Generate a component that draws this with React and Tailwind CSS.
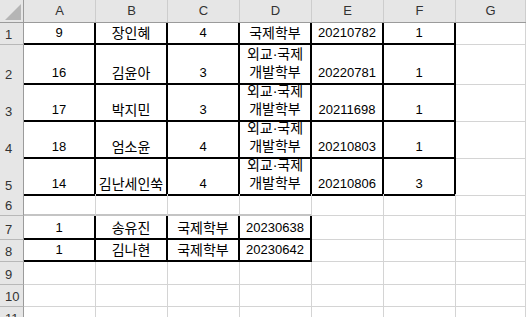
import React from 'react';

// Spreadsheet grid: column letters across the top, row numbers down the left
const columns = ['A', 'B', 'C', 'D', 'E', 'F', 'G'];
const wrapDept = ['외교·국제', '개발학부'];

const rows = [
    { n: 1, h: 'h-[22px]', boxed: 6, cells: ['9', '장인혜', '4', '국제학부', '20210782', '1'] },
    { n: 2, h: 'h-[37px]', boxed: 6, cells: ['16', '김윤아', '3', wrapDept, '20220781', '1'] },
    { n: 3, h: 'h-[37px]', boxed: 6, cells: ['17', '박지민', '3', wrapDept, '20211698', '1'] },
    { n: 4, h: 'h-[37px]', boxed: 6, cells: ['18', '엄소윤', '4', wrapDept, '20210803', '1'] },
    { n: 5, h: 'h-[38px]', boxed: 6, cells: ['14', '김난세인쑥', '4', wrapDept, '20210806', '3'] },
    { n: 6, h: 'h-[22px]', boxed: 0, shade: 4, cells: [] },
    { n: 7, h: 'h-[24px]', boxed: 4, cells: ['1', '송유진', '국제학부', '20230638'] },
    { n: 8, h: 'h-[22px]', boxed: 4, cells: ['1', '김나현', '국제학부', '20230642'] },
    { n: 9, h: 'h-[23px]', boxed: 0, cells: [] },
    { n: 10, h: 'h-[22px]', boxed: 0, cells: [] },
    { n: 11, h: 'h-[22px]', boxed: 0, cells: [] },
];

const isKorean = (v) => /[\uac00-\ud7a3]/.test(v);

const CellValue = ({ value }) => {
    if (!value) return null;
    if (Array.isArray(value)) {
        return (
            <div className="flex flex-col items-center text-[14px] leading-[18px]">
                {value.map((line, i) => (
                    <span key={i}>{line}</span>
                ))}
            </div>
        );
    }
    return (
        <span className={isKorean(value) ? 'text-[14px] leading-[16px]' : 'text-[13px] leading-[16px]'}>
            {value}
        </span>
    );
};

const Row = ({ row }) => (
    <div className={`grid grid-cols-[24px_repeat(6,72px)_1fr] ${row.h}`}>
        <div className="flex items-end pl-[5px] pb-[1px] bg-[#e6e6e6] border-r border-r-[#9b9b9b] border-b border-b-[#b8b8b8] text-[13px] leading-[16px] text-[#333]">
            {row.n}
        </div>
        {columns.map((col, i) => {
            const boxed = i < row.boxed;
            const shaded = row.shade && i < row.shade;
            let cls = 'flex items-end justify-center pb-[2px] ';
            if (boxed) cls += 'border-r-2 border-b-2 border-black';
            else if (shaded) cls += 'border-r border-r-[#d4d4d4] border-b-2 border-b-[#c4c4c4]';
            else cls += 'border-r border-b border-[#d4d4d4]';
            return (
                <div key={col} className={cls}>
                    <CellValue value={row.cells[i]} />
                </div>
            );
        })}
    </div>
);

export default function App() {
    return (
        <div
            className="w-[526px] h-[317px] overflow-hidden bg-white text-black"
            style={{ fontFamily: '"Liberation Sans", "Noto Sans CJK KR", sans-serif' }}
        >
            {/* column letters */}
            <div className="grid grid-cols-[24px_repeat(6,72px)_1fr] h-[23px] bg-[#e6e6e6] border-b border-b-[#9b9b9b]">
                <div className="relative border-r border-r-[#9b9b9b]">
                    <svg className="absolute left-[5px] top-[4px]" width="16" height="16" viewBox="0 0 16 16">
                        <polygon points="0,16 16,0 16,16" fill="#b5b5b5" />
                    </svg>
                </div>
                {columns.map((col) => (
                    <div
                        key={col}
                        className="flex items-center justify-center border-r border-r-[#cdcdcd] text-[13px] text-[#333]"
                    >
                        {col}
                    </div>
                ))}
            </div>
            {rows.map((row) => (
                <Row key={row.n} row={row} />
            ))}
        </div>
    );
}
